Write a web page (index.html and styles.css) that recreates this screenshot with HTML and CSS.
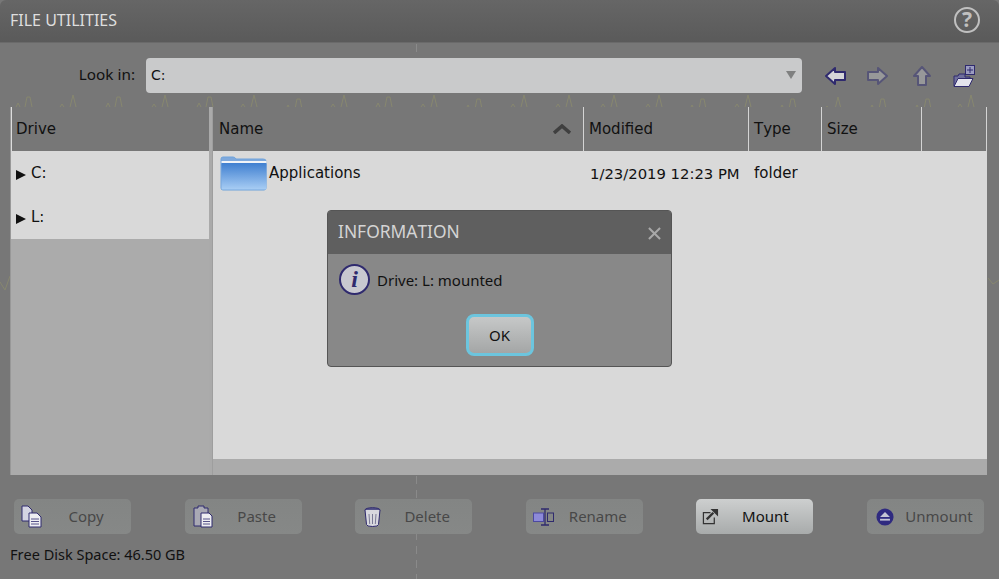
FILE: index.html
```html
<!DOCTYPE html>
<html lang="en">
<head>
  <meta charset="UTF-8" />
  <title>File Utilities</title>
  <link rel="stylesheet" href="styles.css">
</head>
<body>
  <svg class="scope" width="999" height="579">
    <defs>
      <path id="peak" d="M0 12l2-4 2 4M9 12l2-10h3l2 10" />
      <path id="peak2" d="M0 12l2-3 2 3M10 12l3-12 3 12" />
    </defs>
    <g class="trace">
      <use href="#peak" x="16" y="95"/><use href="#peak2" x="60" y="95"/><use href="#peak" x="106" y="95"/>
      <use href="#peak2" x="152" y="95"/><use href="#peak" x="197" y="95"/><use href="#peak2" x="241" y="95"/>
      <use href="#peak" x="286" y="97"/><use href="#peak2" x="331" y="95"/><use href="#peak" x="376" y="95"/>
      <use href="#peak2" x="421" y="95"/><use href="#peak" x="466" y="97"/><use href="#peak2" x="511" y="95"/>
      <use href="#peak2" x="556" y="95"/><use href="#peak2" x="601" y="95"/><use href="#peak2" x="646" y="95"/>
      <use href="#peak" x="690" y="97"/><use href="#peak2" x="735" y="95"/><use href="#peak" x="780" y="97"/>
      <use href="#peak2" x="825" y="97"/><use href="#peak" x="870" y="97"/><use href="#peak" x="915" y="97"/>
      <use href="#peak2" x="958" y="95"/>
      <path d="M0 282l5 8 5-14M988 278l5 6 6-4" />
    </g>
    <path class="grid" d="M416.500 44V58M416.500 476V579" />
  </svg>

  <div class="app">
    <header class="titlebar">
      <span class="title">FILE UTILITIES</span>
      <svg class="help" width="28" height="28" viewBox="0 0 28 28">
        <circle cx="14" cy="14" r="12" fill="none" stroke="#c0c0c0" stroke-width="2" />
        <text x="14" y="21" text-anchor="middle">?</text>
      </svg>
    </header>

    <div class="lookin">
      <label class="lookin-label">Look in:</label>
      <div class="combo">
        <span>C:</span>
        <svg width="10" height="8" viewBox="0 0 10 8"><path d="M0 0h10L5 8z" fill="#7f8080" /></svg>
      </div>
      <div class="nav">
        <svg width="24" height="22" viewBox="0 0 24 22"><path d="M2 11l9-8v4h10v8H11v4z" fill="#d5d6d8" stroke="#2f2a6e" stroke-width="2" stroke-linejoin="round" /></svg>
        <svg class="off nav-fwd" width="24" height="22" viewBox="0 0 24 22"><path d="M22 11l-9-8v4H3v8h10v4z" fill="#a2a3a5" stroke="#4c4a78" stroke-width="2" stroke-linejoin="round" /></svg>
        <svg class="off nav-up" width="24" height="22" viewBox="0 0 24 22"><path d="M12 2l-8 9h4v9h8v-9h4z" fill="#a2a3a5" stroke="#4c4a78" stroke-width="2" stroke-linejoin="round" /></svg>
        <svg width="24" height="24" viewBox="0 0 24 24">
          <rect x="13.500" y="1.500" width="9" height="9" fill="#9b9cc0" stroke="#2f2a6e" />
          <path d="M18 3v6M15 6h6" stroke="#2f2a6e" fill="none" />
          <path d="M2 22V12h4l1-2h6v3h5v2H7l-3 7z" fill="#6f6f9c" stroke="#2f2a6e" />
          <path d="M2 22.500l4-8h15l-4 8z" fill="#e4e4ec" stroke="#2f2a6e" />
        </svg>
      </div>
    </div>

    <div class="browser">
      <div class="drives">
        <div class="head drive-head">Drive</div>
        <div class="drive"><span class="arrow"></span>C:</div>
        <div class="drive"><span class="arrow"></span>L:</div>
      </div>
      <div class="files">
        <div class="head cols">
          <div class="col col-name">Name
            <svg width="18" height="10" viewBox="0 0 18 10"><path d="M1 9l8-7 8 7" fill="none" stroke="#3f3f3f" stroke-width="3.500" /></svg>
          </div>
          <div class="col col-mod">Modified</div>
          <div class="col col-type">Type</div>
          <div class="col col-size">Size</div>
          <div class="col col-end"></div>
        </div>
        <div class="rows">
          <div class="row">
            <div class="cell col-name name-cell">
              <svg width="49" height="36" viewBox="0 0 49 36">
                <defs>
                  <linearGradient id="fold" x1="0" y1="0" x2="0" y2="1">
                    <stop offset="0" stop-color="#3f7fd0" />
                    <stop offset="1" stop-color="#a8cdf4" />
                  </linearGradient>
                </defs>
                <path d="M1 4q0-2 2-2h10q2 0 3 2h27q3 0 3 2v27q0 2-2 2H3q-2 0-2-2z" fill="#7fa9dc" stroke="#6fa3dc" />
                <rect x="1.500" y="6" width="45" height="2" fill="#f1f4f8" />
                <rect x="1.500" y="8" width="45" height="26.500" rx="1" fill="url(#fold)" />
              </svg>
              <span>Applications</span>
            </div>
            <div class="cell col-mod date">1/23/2019 12:23 PM</div>
            <div class="cell col-type">folder</div>
          </div>
        </div>
        <div class="hscroll"></div>
      </div>
    </div>

    <div class="actions">
      <button class="btn" disabled>
        <svg class="ic-copy" width="21" height="23" viewBox="0 0 21 23">
          <path d="M1 1h6l4 4v11H1z" fill="#d4d4e2" stroke="#2f2a6e" />
          <path d="M8 8h8l4 4v10H8z" fill="#eeeef2" stroke="#2f2a6e" />
          <path d="M10 14h8M10 16.500h8M10 19h8" stroke="#2f2a6e" stroke-width=".8" fill="none" />
        </svg>
        <span>Copy</span>
      </button>
      <button class="btn" disabled>
        <svg class="ic-paste" width="20" height="23" viewBox="0 0 20 23">
          <path d="M1 3h4V1h6v2h4v18H1z" fill="#a9a9b4" stroke="#2f2a6e" />
          <path d="M8 8h8l3 3v11H8z" fill="#eeeef2" stroke="#2f2a6e" />
          <path d="M10 14h7M10 16.500h7M10 19h7" stroke="#2f2a6e" stroke-width=".8" fill="none" />
        </svg>
        <span>Paste</span>
      </button>
      <button class="btn" disabled>
        <svg class="ic-delete" width="17" height="20" viewBox="0 0 17 20">
          <ellipse cx="8.500" cy="3" rx="7.500" ry="2.300" fill="#55548a" stroke="#2f2a6e" />
          <path d="M1 3l1.500 14.500q0 2 6 2t6-2L16 3" fill="#d8d8de" stroke="#2f2a6e" />
          <path d="M5 7l.7 10M8.500 7v10M12 7l-.7 10" stroke="#7a7a95" fill="none" />
        </svg>
        <span>Delete</span>
      </button>
      <button class="btn" disabled>
        <svg class="ic-rename" width="21" height="18" viewBox="0 0 21 18">
          <rect x=".500" y="5" width="10" height="8.500" fill="#8d8ad8" stroke="#4c49a0" />
          <rect x="14.500" y="5" width="6" height="8.500" fill="none" stroke="#2f2a6e" />
          <path d="M8 1h8M12 1v16M8 17h8" stroke="#2f2a6e" stroke-width="1.300" fill="none" />
        </svg>
        <span>Rename</span>
      </button>
      <button class="btn on">
        <svg class="ic-mount" width="17" height="17" viewBox="0 0 18 18">
          <path d="M9 5H1.500v11.500H13V10" fill="none" stroke="#333" stroke-width="1.300" />
          <path d="M5 12l7-7" stroke="#333" stroke-width="2.500" fill="none" />
          <path d="M9 1h8v8z" fill="#333" />
        </svg>
        <span>Mount</span>
      </button>
      <button class="btn" disabled>
        <svg class="ic-unmount" width="18" height="18" viewBox="0 0 20 20">
          <circle cx="10" cy="10" r="9.500" fill="#2f2a80" />
          <path d="M10 4.500l5.500 5.500h-11z" fill="#c4c4d4" />
          <rect x="4.500" y="12" width="11" height="2" fill="#c4c4d4" />
        </svg>
        <span>Unmount</span>
      </button>
    </div>

    <div class="freespace">Free Disk Space: 46.50 GB</div>
  </div>

  <div class="dialog">
    <div class="dialog-head">
      <span class="dialog-title">INFORMATION</span>
      <svg class="close" width="13" height="13" viewBox="0 0 14 14"><path d="M1 1l12 12M13 1L1 13" stroke="#a8a8a8" stroke-width="2.200" /></svg>
    </div>
    <div class="dialog-body">
      <div class="message">
        <span class="info-icon">i</span>
        <span>Drive: L: mounted</span>
      </div>
      <button class="ok">OK</button>
    </div>
  </div>
</body>
</html>
```

FILE: styles.css
```css
* {
  box-sizing: border-box;
}
body {
  margin: 0;
  width: 999px;
  height: 579px;
  overflow: hidden;
  background: #777;
  color: #111;
  font-family: "DejaVu Sans", sans-serif;
  font-size: 15px;
  font-kerning: none;
  position: relative;
}
.scope {
  position: absolute;
  left: 0;
  top: 0;
}
.trace {
  fill: none;
  stroke: #87876f;
  stroke-width: 1;
}
.grid {
  fill: none;
  stroke: #8a8a8a;
  stroke-dasharray: 8 6;
}
.app {
  position: relative;
  height: 579px;
  display: flex;
  flex-direction: column;
}
.titlebar {
  height: 43px;
  padding: 0 19px 2px 10px;
  display: flex;
  align-items: center;
  justify-content: space-between;
  background: linear-gradient(#666, #5a5a5a);
  border-radius: 6px 6px 0 0;
  border-bottom: 1px solid #6a6a6a;
}
.title {
  font-family: "Noto Sans", sans-serif;
  font-size: 16px;
  color: #dedede;
}
.help {
  margin-right: -1px;
}
.help text {
  font-family: "Noto Sans", sans-serif;
  font-size: 21px;
  font-weight: bold;
  fill: #c0c0c0;
}
.lookin {
  height: 64px;
  display: flex;
  align-items: center;
}
.lookin-label {
  width: 135px;
  padding-bottom: 2px;
  text-align: right;
  font-family: "Noto Sans", sans-serif;
  font-size: 15.300px;
}
.combo {
  width: 656px;
  height: 35px;
  margin-left: 11px;
  padding: 0 6px 0 5px;
  display: flex;
  align-items: center;
  justify-content: space-between;
  background: #c9cacb;
  border-radius: 4px;
  font-size: 14px;
}
.nav {
  display: flex;
  align-items: center;
  gap: 18px;
  margin-left: 22px;
  padding-top: 2px;
}
.nav .off {
  opacity: .75;
}
.nav-fwd {
  margin-left: -1px;
}
.nav-up {
  margin-left: 3px;
}
.browser {
  width: 977px;
  height: 368px;
  margin-left: 10px;
  display: flex;
  background: #aaa;
}
.drives {
  width: 199px;
  margin-right: 4px;
  display: flex;
  flex-direction: column;
  background: #ababab;
  border-left: 1px solid #989898;
}
.head {
  height: 44px;
  background: #777;
  display: flex;
  align-items: center;
}
.drive-head {
  padding-left: 4px;
  border-left: 1px solid #dcdcdc;
}
.drive {
  height: 44px;
  padding-left: 5px;
  background: #d9d9d9;
  display: flex;
  align-items: center;
  gap: 5px;
}
.arrow {
  width: 0;
  height: 0;
  margin-top: 4px;
  border-left: 10px solid #111;
  border-top: 5px solid transparent;
  border-bottom: 5px solid transparent;
}
.files {
  flex: 1;
  display: flex;
  flex-direction: column;
  border-left: 1px solid #9e9e9e;
  margin-left: -1px;
}
.cols .col {
  height: 44px;
  display: flex;
  align-items: center;
  padding-left: 5px;
  border-right: 1px solid #d4d4d4;
}
.col-name {
  width: 371px;
}
.cols .col-name {
  padding-left: 6px;
  padding-right: 12px;
  justify-content: space-between;
}
.col-mod {
  width: 165px;
}
.col-type {
  width: 73px;
}
.col-size {
  width: 100px;
}
.col-end {
  flex: 1;
}
.rows {
  flex: 1;
  background: #d9d9d9;
}
.row {
  height: 44px;
  display: flex;
  align-items: center;
}
.cell {
  padding-left: 6px;
}
.date {
  font-size: 14.800px;
}
.row .col-type {
  padding-left: 5px;
}
.name-cell {
  display: flex;
  align-items: center;
  padding-left: 7px;
}
.hscroll {
  height: 16px;
  background: #ababab;
}
.actions {
  display: flex;
  justify-content: space-between;
  padding: 24px 15px 0 14px;
}
.btn {
  width: 117px;
  height: 35px;
  padding: 0;
  border: 0;
  border-radius: 5px;
  background: linear-gradient(#838584, #868887);
  color: #484848;
  font-family: "Noto Sans", sans-serif;
  font-size: 15px;
  display: grid;
  grid-template-columns: 27px 90px;
  align-items: center;
  justify-items: start;
}
.btn span {
  width: 100%;
  padding-bottom: 2px;
  text-align: center;
}
.btn.on {
  background: linear-gradient(#cdcfcf, #a8abab);
  color: #111;
}
.btn.on span {
  padding-right: 6px;
}
.ic-copy {
  margin-left: 7px;
}
.ic-paste {
  margin-left: 8px;
}
.ic-delete {
  margin-left: 9px;
}
.ic-rename {
  margin-left: 7px;
}
.ic-mount {
  margin-left: 6px;
}
.ic-unmount {
  margin-left: 9px;
}
.freespace {
  padding: 10px 0 0 10px;
  font-family: "Noto Sans", sans-serif;
  font-size: 14.500px;
}
.dialog {
  position: absolute;
  left: 327px;
  top: 210px;
  width: 345px;
  height: 157px;
  background: #888;
  border: 1px solid #555;
  border-radius: 4px;
  overflow: hidden;
}
.dialog-head {
  height: 43px;
  padding: 0 10px 4px 10px;
  display: flex;
  align-items: center;
  justify-content: space-between;
  background: #5f5f5f;
}
.dialog-title {
  font-family: "Noto Sans", sans-serif;
  font-size: 17.400px;
  color: #d4d4d4;
}
.close {
  margin-top: 6px;
}
.dialog-body {
  display: flex;
  flex-direction: column;
  align-items: center;
}
.message {
  width: 100%;
  padding: 10px 0 0 11px;
  display: flex;
  align-items: center;
  gap: 7px;
  font-family: "Noto Sans", sans-serif;
}
.info-icon {
  width: 31px;
  height: 31px;
  border: 2px solid #2f2a6e;
  border-radius: 50%;
  background: #c8c8d0;
  color: #2f2a6e;
  font-family: "Liberation Serif", serif;
  font-style: italic;
  font-weight: bold;
  font-size: 24px;
  line-height: 27px;
  text-align: center;
}
.ok {
  width: 68px;
  height: 42px;
  margin-top: 19px;
  border: 3px solid #6cc5de;
  border-radius: 8px;
  background: linear-gradient(#c6c8c8, #a4a6a6);
  color: #111;
  font-family: "Noto Sans", sans-serif;
  font-size: 15px;
}
```
